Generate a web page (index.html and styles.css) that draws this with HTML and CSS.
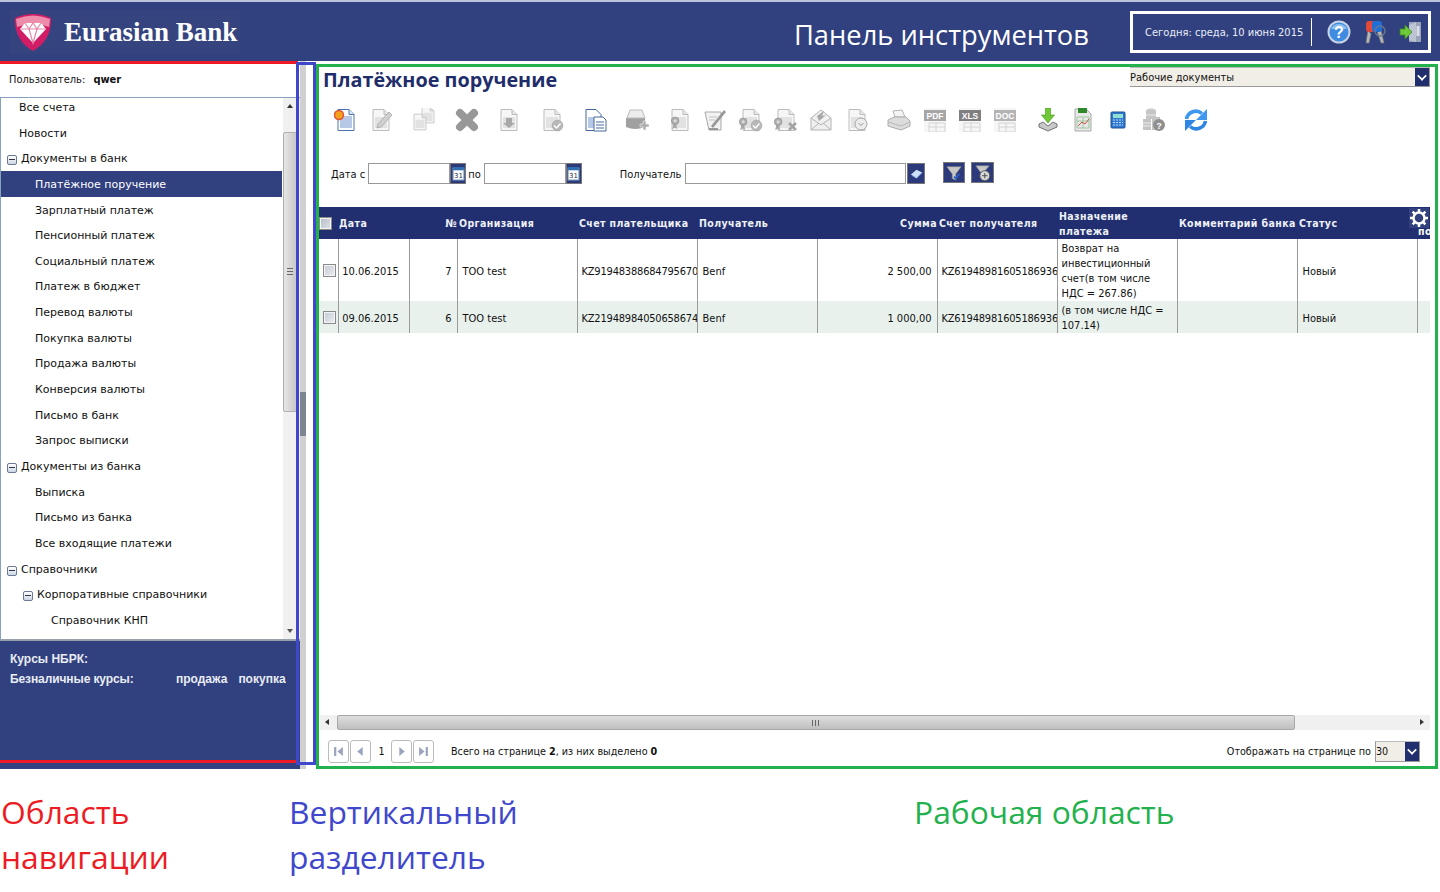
FILE: index.html
```html
<!DOCTYPE html>
<html lang="ru">
<head>
<meta charset="utf-8">
<title>Eurasian Bank</title>
<link rel="stylesheet" href="styles.css">
</head>
<body>
<svg class="defs" aria-hidden="true">
  <symbol id="doc" viewBox="0 0 24 24"><path d="M4 1.500h11l5 5v16H4z" fill="#f6f6f6" stroke="#bcbcbc"/><path d="M15 1.500v5h5" fill="#e6e6e6" stroke="#bcbcbc"/><rect x="6" y="9" width="12" height="11" fill="#e2e2e2"/></symbol>
  <symbol id="seal" viewBox="0 0 24 24"><path d="M3 15l-1.500 8 3-2 3 2-1.500-8z" fill="#a8a8a8"/><circle cx="5" cy="13" r="4.500" fill="#b0b0b0" stroke="#949494"/><circle cx="5" cy="13" r="1.800" fill="#dcdcdc"/></symbol>
  <symbol id="badge" viewBox="0 0 24 24"><circle cx="12" cy="12" r="10" fill="#b8b8b8" stroke="#9a9a9a"/></symbol>
  <symbol id="file" viewBox="0 0 24 24"><rect x="1" y="0" width="22" height="24" fill="#f6f6f6"/><path d="M6 15h16v9H6zM6 19h16M13 15v9" fill="none" stroke="#d4d4d4"/></symbol>
</svg>

<header class="topbar">
  <div class="brand">
    <svg class="logo" viewBox="0 0 40 40"><path d="M2 6 Q20 -2 38 6 Q39 28 20 39 Q1 28 2 6z" fill="#d11d66"/><path d="M3 7 Q20 0 37 7 L36 15 Q20 9 4 15z" fill="#ee8cac"/><path d="M12 11h16l5 6-13 14L7 17z" fill="#fff"/><path d="M12 11l4 6h8l4-6M7 17h26M16 17l4 14 4-14M20 11l-4 6M20 11l4 6" fill="none" stroke="#e486a8" stroke-width="1.200"/></svg>
    <span class="brand-name">Eurasian Bank</span>
  </div>
  <div class="panel-title">Панель инструментов</div>
  <div class="tools">
    <span class="today">Сегодня: среда, 10 июня 2015</span>
    <svg class="tool" viewBox="0 0 24 24"><circle cx="12" cy="12" r="10.500" fill="#3f8be0" stroke="#c5d3e4" stroke-width="2"/><path d="M4 9a9 9 0 0 1 16 0z" fill="#8cc0f2"/><text x="12" y="17.500" text-anchor="middle" class="q">?</text></svg>
    <svg class="tool" viewBox="0 0 24 24"><path d="M5 10l-2 13h3l2-9zM14 11l4 12h3l-3-13z" fill="#b5b5b5" stroke="#777" stroke-width=".6"/><rect x="3" y="1" width="9" height="11" rx="3" fill="#e04a3a"/><rect x="9" y="1" width="10" height="11" rx="3" fill="#1f6fd6"/><circle cx="17" cy="11" r="5" fill="none" stroke="#6c7a90" stroke-width="1.300"/></svg>
    <svg class="tool" viewBox="0 0 24 24"><path d="M10 2h12v20H10z" fill="#98a2b8"/><path d="M10 5l7-3v20l-7-2z" fill="#bcc3d2"/><rect x="17.500" y="6" width="3" height="10" fill="#d9dde6"/><path d="M1 9h5V5l7 7-7 7v-4H1z" fill="#6fc83a" stroke="#3f8e1e" stroke-width=".8"/></svg>
  </div>
</header>

<div class="layout">
  <nav class="nav">
    <div class="user">Пользователь: <b>qwer</b></div>
    <div class="tree">
      <ul class="tree-list">
        <li class="l0">Все счета</li>
        <li class="l0">Новости</li>
        <li class="g0"><i class="minus"></i>Документы в банк</li>
        <li class="l1 sel">Платёжное поручение</li>
        <li class="l1">Зарплатный платеж</li>
        <li class="l1">Пенсионный платеж</li>
        <li class="l1">Социальный платеж</li>
        <li class="l1">Платеж в бюджет</li>
        <li class="l1">Перевод валюты</li>
        <li class="l1">Покупка валюты</li>
        <li class="l1">Продажа валюты</li>
        <li class="l1">Конверсия валюты</li>
        <li class="l1">Письмо в банк</li>
        <li class="l1">Запрос выписки</li>
        <li class="g0"><i class="minus"></i>Документы из банка</li>
        <li class="l1">Выписка</li>
        <li class="l1">Письмо из банка</li>
        <li class="l1">Все входящие платежи</li>
        <li class="g0"><i class="minus"></i>Справочники</li>
        <li class="g1"><i class="minus"></i>Корпоративные справочники</li>
        <li class="l2">Справочник КНП</li>
      </ul>
      <div class="vscroll">
        <i class="arr-up"></i>
        <div class="vthumb"><i class="vgrip"></i></div>
        <i class="arr-down"></i>
      </div>
    </div>
    <div class="rates">
      <div class="rates-row">Курсы НБРК:</div>
      <div class="rates-row rates-sub"><span class="rates-name">Безналичные курсы:</span><span>продажа</span><span>покупка</span></div>
    </div>
  </nav>

  <div class="splitter"><i class="handle"></i></div>

  <main class="work">
    <div class="title-row">
      <h1>Платёжное поручение</h1>
      <div class="select wide-select"><span>Рабочие документы</span><i class="sel-btn"></i></div>
    </div>

    <div class="toolbar">
      <svg class="ic" viewBox="0 0 24 24"><path d="M4 1.500h11l5 5v16H4z" fill="#fff" stroke="#4f74ad"/><path d="M15 1.500v5h5" fill="#dbe6f5" stroke="#4f74ad"/><rect x="6" y="8" width="12" height="12" fill="#b5c8e6"/><circle cx="5" cy="7" r="4.500" fill="#f2a21a" stroke="#e0503a" stroke-width="1.500"/></svg>
      <svg class="ic" viewBox="0 0 24 24"><use href="#doc"/><path d="M8 20l1-4L20 4l3 3L12 19z" fill="#d0d0d0" stroke="#a4a4a4" stroke-width=".8"/></svg>
      <svg class="ic gap" viewBox="0 0 24 24"><use href="#doc" x="7" y="-2" width="18" height="18"/><use href="#doc" x="-1" y="5" width="18" height="18"/></svg>
      <svg class="ic gap" viewBox="0 0 24 24"><path d="M5 5l14 14M19 5L5 19" stroke="#989898" stroke-width="8" stroke-linecap="round"/></svg>
      <svg class="ic gap" viewBox="0 0 24 24"><use href="#doc"/><path d="M9 10h6v5h3l-6 5-6-5h3z" fill="#a8a8a8"/></svg>
      <svg class="ic gap" viewBox="0 0 24 24"><use href="#doc"/><use href="#badge" x="11" y="11" width="13" height="13"/><path d="M14 17.500l2.500 2.500 4-4.500" fill="none" stroke="#fff" stroke-width="1.500"/></svg>
      <svg class="ic gap" viewBox="0 0 24 24"><path d="M3 1.500h10l5 5v16H3z" fill="#fff" stroke="#47689f"/><rect x="5" y="9" width="11" height="11" fill="#b5c8e6"/><path d="M11 9h9l3 3v11H11z" fill="#fff" stroke="#47689f"/><path d="M13 14h8M13 17h8M13 20h8" stroke="#47689f"/></svg>
      <svg class="ic gap" viewBox="0 0 24 24"><path d="M1 10h19v9q-10 4-19 0z" fill="#a0a0a0"/><path d="M5 2h12l3 8H2z" fill="#ececec" stroke="#bbb"/><path d="M15 16h3v-3h3v3h3v3h-3v3h-3v-3h-3z" fill="#b0b0b0" stroke="#fff" stroke-width=".5"/></svg>
      <svg class="ic gap" viewBox="0 0 24 24"><use href="#doc"/><use href="#seal" x="3" y="2" width="20" height="20"/></svg>
      <svg class="ic" viewBox="0 0 24 24"><path d="M2 4h16v18H6z" fill="#f2f2f2" stroke="#a8a8a8"/><path d="M6 9h8M6 12h6" stroke="#c0c0c0"/><path d="M8 18L21 2l2 2L10 20z" fill="#999"/><path d="M6 21h9" stroke="#808080" stroke-width="1.500"/></svg>
      <svg class="ic" viewBox="0 0 24 24"><use href="#doc"/><use href="#seal" x="0" y="3" width="20" height="20"/><use href="#badge" x="11" y="11" width="13" height="13"/><path d="M14 17.500l2.500 2.500 4-4.500" fill="none" stroke="#fff" stroke-width="1.500"/></svg>
      <svg class="ic" viewBox="0 0 24 24"><use href="#doc"/><use href="#seal" x="0" y="3" width="20" height="20"/><path d="M15 15l7 7M22 15l-7 7" stroke="#a4a4a4" stroke-width="2.500"/></svg>
      <svg class="ic" viewBox="0 0 24 24"><path d="M2 10L12 2l10 8v12H2z" fill="#efefef" stroke="#b4b4b4"/><path d="M8 8l7-5-2 5 4-1-7 6z" fill="#a8a8a8"/><path d="M2 10l10 7 10-7M2 22l8-7M22 22l-8-7" fill="none" stroke="#b4b4b4"/></svg>
      <svg class="ic" viewBox="0 0 24 24"><use href="#doc"/><circle cx="16" cy="16" r="6" fill="#ececec" stroke="#a8a8a8"/><path d="M13.500 15l2.500 2.500 2.500-2.500" fill="none" stroke="#999"/></svg>
      <svg class="ic gap" viewBox="0 0 24 24"><path d="M6 3l9-1 3 7H8z" fill="#f4f4f4" stroke="#b4b4b4"/><path d="M1 12l6-3h12l4 4v5l-9 4-13-4z" fill="#dcdcdc" stroke="#acacac"/><path d="M1 14l13 4 9-4" fill="none" stroke="#b8b8b8"/></svg>
      <svg class="ic" viewBox="0 0 24 24"><use href="#file"/><rect x="1" y="2" width="22" height="11" fill="#a6a6a6"/><text x="12" y="11" text-anchor="middle" class="ft">PDF</text></svg>
      <svg class="ic" viewBox="0 0 24 24"><use href="#file"/><rect x="1" y="2" width="22" height="11" fill="#7f7f7f"/><text x="12" y="11" text-anchor="middle" class="ft">XLS</text></svg>
      <svg class="ic" viewBox="0 0 24 24"><use href="#file"/><rect x="1" y="2" width="22" height="11" fill="#b4b4b4"/><text x="12" y="11" text-anchor="middle" class="ft">DOC</text></svg>
      <svg class="ic gap" viewBox="0 0 24 24"><path d="M9.500 0h5v7h4l-6.500 8-6.500-8h4z" fill="#6ec935" stroke="#45961c" stroke-width=".6"/><path d="M3 16l4-2 5 4 5-4 4 2v3l-9 4-9-4z" fill="#c8c8c8" stroke="#555" stroke-width=".8"/></svg>
      <svg class="ic" viewBox="0 0 24 24"><path d="M4 1h11l5 5v17H4z" fill="#e8e8e8" stroke="#aaa"/><rect x="7" y="0" width="9" height="5" fill="#2f8a2c"/><path d="M6 9h12v11H6zM6 13h12M12 9v11" fill="none" stroke="#9fc9a2"/><path d="M7 18l4-4 3 2 4-5" fill="none" stroke="#cc5544"/></svg>
      <svg class="ic" viewBox="0 0 24 24"><rect x="5" y="4" width="14" height="16" rx="1" fill="#2e78cf" stroke="#204f96"/><rect x="7" y="6" width="10" height="4" fill="#8fe0d0"/><path d="M7 12h10M7 14.500h10M7 17h10" stroke="#bcd9f5" stroke-dasharray="2 1"/></svg>
      <svg class="ic" viewBox="0 0 24 24"><ellipse cx="9" cy="3" rx="5" ry="2.500" fill="#c8c8c8"/><path d="M4 3h10v8H4zM1 11h8v11H1zM10 9h8v13h-8z" fill="#c4c4c4"/><path d="M1 15h8M1 18h8M4 7h10" stroke="#ececec"/><circle cx="17" cy="17" r="6" fill="#8f8f8f"/><text x="17" y="20.500" text-anchor="middle" class="q2">?</text></svg>
      <svg class="ic gap" viewBox="0 0 24 24"><path d="M2.500 11A9.500 9.500 0 0 1 18 5.500" fill="none" stroke="#3f97ef" stroke-width="3.600"/><path d="M23 1v11H12z" fill="#3f97ef"/><path d="M21.500 13A9.500 9.500 0 0 1 6 18.500" fill="none" stroke="#2f86e2" stroke-width="3.600"/><path d="M1 23V12h11z" fill="#2f86e2"/></svg>
    </div>

    <div class="filters">
      <span class="flabel">Дата с</span>
      <div class="field date"></div><button class="btn cal"><svg viewBox="0 0 12 14"><rect x="1" y="2" width="10" height="11" fill="#fff" stroke="#8fb0d0"/><rect x="1" y="1" width="10" height="3" fill="#2f6fb0"/><text x="6" y="11.500" text-anchor="middle" class="cal-t">31</text></svg></button>
      <span class="flabel po">по</span>
      <div class="field date"></div><button class="btn cal"><svg viewBox="0 0 12 14"><rect x="1" y="2" width="10" height="11" fill="#fff" stroke="#8fb0d0"/><rect x="1" y="1" width="10" height="3" fill="#2f6fb0"/><text x="6" y="11.500" text-anchor="middle" class="cal-t">31</text></svg></button>
      <span class="flabel rec">Получатель</span>
      <div class="field recipient"></div><button class="btn book"><svg viewBox="0 0 14 12"><path d="M1 7l6-5 6 3-6 6z" fill="#cfe0fa"/><path d="M2 8l5 3 6-6" fill="none" stroke="#7fa8e8"/></svg></button>
      <button class="btn fbtn"><svg viewBox="0 0 20 20"><path d="M2 3h16l-6 8v7l-4-2v-5z" fill="#c8c8c8" stroke="#888" stroke-width=".6"/><path d="M10 14l2 2 4-5" fill="none" stroke="#2a62c4" stroke-width="2"/></svg></button>
      <button class="btn fbtn f2"><svg viewBox="0 0 20 20"><path d="M2 2h15l-6 7H7z" fill="#c8c8c8" stroke="#888" stroke-width=".6"/><circle cx="12" cy="13" r="5.500" fill="#d8d8d8" stroke="#555"/><path d="M9 13h6M12 10v6" stroke="#444"/></svg></button>
    </div>

    <div class="grid-wrap">
      <table class="grid">
        <colgroup><col class="c0"><col class="c1"><col class="c2"><col class="c3"><col class="c4"><col class="c4"><col class="c4"><col class="c4"><col class="c4"><col class="c4"><col class="c4"><col class="c5"></colgroup>
        <thead>
          <tr>
            <th class="chk"><i class="cb"></i></th>
            <th class="th-date">Дата</th>
            <th class="right">№</th>
            <th>Организация</th>
            <th>Счет плательщика</th>
            <th>Получатель</th>
            <th class="right">Сумма</th>
            <th>Счет получателя</th>
            <th class="th-wrap">Назначение платежа</th>
            <th>Комментарий банка</th>
            <th>Статус</th>
            <th class="gear-cell">
              <svg class="gear" viewBox="0 0 20 20"><circle cx="10" cy="10" r="5.500" fill="none" stroke="#fff" stroke-width="2.500"/><path d="M10 1v4M10 15v4M1 10h4M15 10h4M3.600 3.600l3 3M13.400 13.400l3 3M3.600 16.400l3-3M13.400 6.600l3-3" stroke="#fff" stroke-width="2.500"/></svg>
              <span class="gear-text">по</span>
            </th>
          </tr>
        </thead>
        <tbody>
          <tr class="r1">
            <td class="chk"><i class="cb"></i></td>
            <td class="center">10.06.2015</td>
            <td class="right">7</td>
            <td>ТОО test</td>
            <td class="acc">KZ91948388684795670</td>
            <td>Benf</td>
            <td class="right">2 500,00</td>
            <td class="acc">KZ61948981605186936</td>
            <td class="wrap">Возврат на инвестиционный счет(в том числе НДС = 267.86)</td>
            <td></td>
            <td>Новый</td>
            <td></td>
          </tr>
          <tr class="r2">
            <td class="chk"><i class="cb"></i></td>
            <td class="center">09.06.2015</td>
            <td class="right">6</td>
            <td>ТОО test</td>
            <td class="acc">KZ21948984050658674</td>
            <td>Benf</td>
            <td class="right">1 000,00</td>
            <td class="acc">KZ61948981605186936</td>
            <td class="wrap">(в том числе НДС = 107.14)</td>
            <td></td>
            <td>Новый</td>
            <td></td>
          </tr>
        </tbody>
      </table>
    </div>

    <div class="hscroll">
      <i class="arr-left"></i>
      <div class="hthumb"><i class="hgrip"></i></div>
      <i class="arr-right"></i>
    </div>

    <div class="pager">
      <button class="pg"><svg viewBox="0 0 10 10"><path d="M1 1h2v8H1zM9 1v8L4 5z"/></svg></button>
      <button class="pg"><svg viewBox="0 0 10 10"><path d="M7 1v8L2 5z"/></svg></button>
      <span class="pg-num">1</span>
      <button class="pg"><svg viewBox="0 0 10 10"><path d="M3 1v8l5-4z"/></svg></button>
      <button class="pg"><svg viewBox="0 0 10 10"><path d="M1 1v8l5-4zM7 1h2v8H7z"/></svg></button>
      <span class="pg-info">Всего на странице <b>2</b>, из них выделено <b>0</b></span>
      <span class="pg-size">Отображать на странице по</span>
      <div class="select size-select"><span>30</span><i class="sel-btn"></i></div>
    </div>
  </main>
</div>

<div class="notes">
  <div class="note n-red">Область<br>навигации</div>
  <div class="note n-blue">Вертикальный<br>разделитель</div>
  <div class="note n-green">Рабочая область</div>
</div>

<div class="mark mark-red"></div>
<div class="mark mark-blue"></div>
<div class="mark mark-green"></div>
</body>
</html>
```

FILE: styles.css
```css
* { box-sizing: border-box; }
html, body { margin: 0; padding: 0; }
body {
  position: relative;
  width: 1440px;
  height: 892px;
  overflow: hidden;
  background: #fff;
  color: #111;
  font-family: "DejaVu Sans Condensed", "DejaVu Sans", sans-serif;
  font-size: 11px;
}
.defs { position: absolute; width: 0; height: 0; }

/* header */
.topbar {
  height: 61px;
  background: #31407f;
  border-top: 2px solid #b9c4dc;
  display: flex;
  align-items: center;
  padding: 0 9px 0 10px;
}
.brand { width: 230px; height: 44px; background: #35447f; display: flex; align-items: center; }
.logo { width: 40px; height: 40px; margin-left: 3px; flex: none; }
.brand-name {
  margin-left: 11px;
  color: #fff;
  font: bold 27px "Liberation Serif", serif;
  padding-top: 2px;
}
.panel-title {
  margin-left: 554px;
  width: 336px;
  padding-top: 5px;
  color: #fff;
  font: 27.300px "Open Sans", sans-serif;
  white-space: nowrap;
}
.tools {
  width: 301px;
  height: 42px;
  border: 3px solid #fff;
  display: flex;
  align-items: center;
  color: #e8edf6;
  font-size: 11px;
}
.today { width: 179px; height: 28px; line-height: 30px; padding-left: 12px; border-right: 1px solid #fff; white-space: nowrap; flex: none; }
.tool { width: 24px; height: 24px; margin-left: 12px; flex: none; }
.today + .tool { margin-left: 15px; }
.q { fill: #fff; font: bold 16px "Liberation Sans", sans-serif; }

.layout { display: flex; height: 708px; }

/* navigation */
.nav { width: 300px; flex: none; display: flex; flex-direction: column; }
.user { height: 36px; padding: 12px 0 0 9px; font-size: 11px; color: #111; }
.user b { margin-left: 5px; }
.tree {
  height: 544px;
  border: 1px solid #86a2bf;
  border-bottom: 2px solid #9aa0a8;
  border-right: 0;
  position: relative;
  display: flex;
  overflow: hidden;
}
.tree-list {
  list-style: none;
  margin: -4px 0 0;
  padding: 0;
  width: 281px;
  flex: none;
  font: 11px "DejaVu Sans", sans-serif;
}
.tree-list li { height: 25.650px; line-height: 28px; white-space: nowrap; display: flex; align-items: flex-start; }
.l0 { padding-left: 18px; }
.l1 { padding-left: 34px; }
.l2 { padding-left: 50px; }
.g0 { padding-left: 6px; }
.g1 { padding-left: 22px; }
.tree-list .sel { background: #31407f; color: #fff; }
.minus {
  width: 10px; height: 10px; margin: 10px 4px 0 0; flex: none;
  border: 1px solid #6b7a92; border-radius: 2px;
  background: linear-gradient(#fff, #ccd6e4);
  position: relative;
}
.minus::after { content: ""; position: absolute; left: 1px; right: 1px; top: 3px; height: 1px; background: #334; }
.vscroll { width: 18px; background: #f0f0f0; margin-left: 1px; position: relative; flex: none; }
.arr-up, .arr-down, .arr-left, .arr-right { position: absolute; width: 0; height: 0; border-style: solid; border-color: transparent; }
.arr-up { left: 4px; top: 6px; border-width: 0 3.500px 4px; border-bottom-color: #333; }
.arr-down { left: 4px; bottom: 6px; border-width: 4px 3.500px 0; border-top-color: #555; }
.vthumb {
  position: absolute; left: 0; top: 34px; width: 14px; height: 280px;
  background: linear-gradient(90deg, #e6e6e6, #c8c8c8);
  border: 1px solid #b0b0b0; border-radius: 2px;
}
.vgrip { position: absolute; left: 3px; top: 135px; width: 6px; height: 7px; border-top: 1px solid #666; border-bottom: 1px solid #666; }
.vgrip::after { content: ""; position: absolute; left: 0; right: 0; top: 2px; height: 1px; background: #666; }

.rates { flex: 1; background: #31407f; color: #e8ecf4; padding: 10px 0 0 10px; font: bold 12px "Liberation Sans", sans-serif; }
.rates-row { height: 20px; line-height: 16px; }
.rates-sub { display: flex; }
.rates-name { width: 166px; letter-spacing: -.1px; }
.rates-sub span:last-child { margin-left: 11px; }

/* splitter */
.splitter { width: 6px; flex: none; background: #d0d0d0; position: relative; display: flex; align-items: center; }
.handle { width: 6px; height: 44px; background: #7d868e; margin-top: -2px; }

/* work area */
.work { width: 1124px; margin-left: 10px; padding: 3px 0 0 2px; display: flex; flex-direction: column; }
.title-row { height: 36px; display: flex; justify-content: space-between; padding-right: 10px; }
h1 { margin: 2px 0 0 5px; font: bold 19.800px "Open Sans", sans-serif; color: #1f2d6b; line-height: 27px; white-space: nowrap; }
.select { display: flex; height: 21px; background: #f1eee7; border: 1px solid #999; border-top-color: #bbb; line-height: 19px; }
.select span { flex: 1; overflow: hidden; }
.wide-select { width: 300px; height: 20px; margin-top: 3px; border-left: 0; }
.sel-btn { width: 14px; background: #212f6f; position: relative; flex: none; }
.sel-btn::after { content: ""; position: absolute; left: 3px; top: 4px; width: 6px; height: 6px; border: solid #fff; border-width: 0 2px 2px 0; transform: rotate(45deg) scale(.85); }

.toolbar { height: 48px; display: flex; align-items: flex-start; padding: 8px 0 0 16px; gap: 11.300px; }
.ic { width: 24px; height: 24px; flex: none; }
.gap { margin-left: 7.400px; }
.ft { fill: #fff; font: bold 8.500px "Liberation Sans", sans-serif; }
.q2 { fill: #fff; font: bold 9px "Liberation Sans", sans-serif; }

.filters { height: 24px; margin-top: 15px; display: flex; align-items: flex-start; padding-left: 13px; }
.flabel { line-height: 23px; margin-right: 3px; white-space: nowrap; }
.po { margin: 0 3px 0 2px; }
.rec { margin-left: 38px; margin-right: 4px; }
.field { height: 21px; border: 1px solid #999; background: #fff; }
.date { width: 82px; }
.recipient { width: 221px; }
.btn { padding: 0; border: 1px solid #777; background: #2c3a7c; display: flex; align-items: center; justify-content: center; height: 21px; width: 16px; flex: none; }
.btn svg { width: 13px; height: 15px; }
.book { width: 18px; margin-left: 1px; }
.fbtn { width: 22px; height: 21px; margin: -1px 0 0 18px; }
.fbtn svg { width: 18px; height: 18px; }
.f2 { width: 23px; margin-left: 6px; }
.cal-t { font: 6.500px "DejaVu Sans", sans-serif; fill: #234; }

.grid-wrap { flex: 1; overflow: hidden; margin-top: 20px; width: 1112px; }
.grid { table-layout: fixed; border-collapse: collapse; width: 1112px; }
.c0 { width: 20px; } .c1 { width: 71px; } .c2 { width: 48px; } .c3 { width: 120px; }
.c4 { width: 120px; } .c5 { width: 13px; }
thead tr { height: 32px; background: #212f70; }
th {
  color: #eef1f7; text-align: left; padding: 1px 0 0 2px;
  font: bold 10.500px "DejaVu Sans Condensed", "DejaVu Sans", sans-serif;
  line-height: 15px; letter-spacing: .4px;
  white-space: nowrap; overflow: hidden; vertical-align: middle;
  position: relative;
}
th.th-date { padding-left: 1px; }
th.th-wrap { white-space: normal; padding-top: 2px; }
th.right { text-align: right; padding: 1px 0 0; }
td { padding: 3px 1px 0 5px; border-right: 1px solid #9a9a9a; overflow: hidden; white-space: nowrap; color: #111; line-height: 15px; }
td:last-child { border-right: 0; }
td.right { text-align: right; padding-right: 5px; }
td.center { text-align: center; padding: 3px 6px 0 0; }
td.acc { padding: 3px 0 0 4px; letter-spacing: -.2px; }
td.wrap { white-space: normal; padding: 2px 10px 0 4px; }
.r1 { height: 62px; background: #fff; }
.r2 { height: 32px; background: #e9f1ed; }
th.chk, td.chk { padding: 0; text-align: center; }
.cb {
  display: inline-block; width: 13px; height: 13px; vertical-align: middle;
  border: 1px solid #8a8a8a;
  background: linear-gradient(135deg, #c4c9d4, #eceef2);
  box-shadow: inset 0 0 0 1px #f4f4f4;
}
td .cb { margin-left: 3px; }
th .cb { margin-right: 5px; background: linear-gradient(135deg, #b4bac8, #dfe2e8); }
.gear-cell { overflow: visible; padding: 0; }
.gear { position: absolute; left: -8px; top: 1px; width: 20px; height: 20px; background: #33427f; }
.gear-text { position: absolute; left: 1px; top: 17px; color: #fff; }

.hscroll { height: 15px; width: 1110px; margin: 0 0 0 2px; background: #f0f0f0; position: relative; flex: none; }
.arr-left { left: 5px; top: 4px; border-width: 3.500px 4px 3.500px 0; border-right-color: #333; }
.arr-right { right: 6px; top: 4px; border-width: 3.500px 0 3.500px 4px; border-left-color: #333; }
.hthumb { position: absolute; left: 17px; top: 0; width: 958px; height: 15px; background: linear-gradient(#dedede, #bfbfbf); border: 1px solid #a8a8a8; border-radius: 2px; }
.hgrip { position: absolute; left: 474px; top: 4px; width: 7px; height: 6px; border-left: 1px solid #666; border-right: 1px solid #666; }
.hgrip::after { content: ""; position: absolute; left: 2px; top: 0; width: 1px; height: 6px; background: #666; }

.pager { height: 39px; flex: none; display: flex; align-items: center; padding: 4px 20px 0 10px; white-space: nowrap; font-size: 10.700px; }
.pg { width: 21px; height: 23px; padding: 0; margin-right: 1px; background: #fff; border: 1px solid #bbb; border-radius: 3px; display: flex; align-items: center; justify-content: center; flex: none; }
.pg svg { width: 11px; height: 11px; fill: #9ba3bd; }
.pg-num { width: 19px; text-align: center; }
.pg-info { margin-left: 16px; }
.pg-size { margin: 0 4px 0 auto; }
.size-select { width: 45px; }

/* labels under the screenshot */
.notes { display: flex; height: 123px; padding: 20px 0 0 1px; font: 31.800px/45px "Open Sans", sans-serif; }
.note { white-space: nowrap; }
.n-red { width: 288px; color: #ed1c24; }
.n-blue { width: 625px; color: #3f48cc; }
.n-green { color: #22b14c; }

/* annotation frames over the screenshot */
.mark { position: absolute; pointer-events: none; }
.mark-red { left: 0; top: 61px; width: 298px; height: 702px; border-top: 3px solid #ed1c24; border-bottom: 3px solid #ed1c24; }
.mark-blue { left: 296px; top: 62px; width: 20px; height: 703px; border: 3px solid #3f48cc; }
.mark-green { left: 316px; top: 64px; width: 1122px; height: 705px; border: 3px solid #22b14c; }
```
